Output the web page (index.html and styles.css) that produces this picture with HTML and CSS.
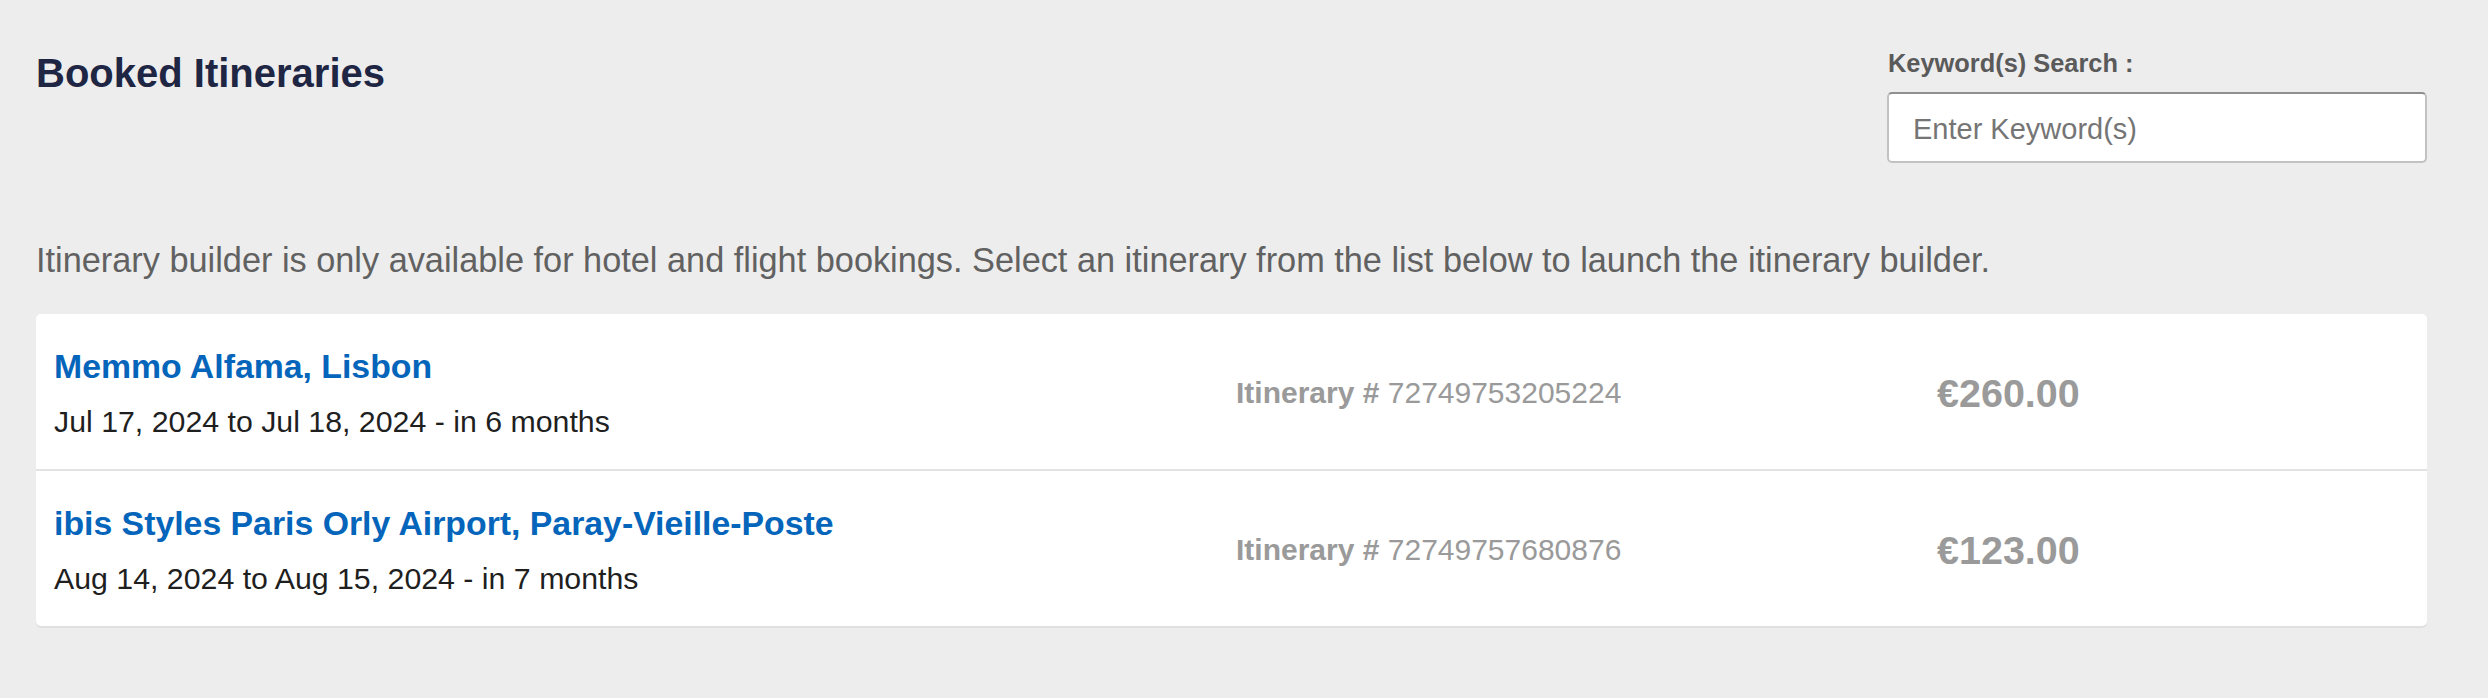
FILE: index.html
```html
<!DOCTYPE html>
<html lang="en">
<head>
<meta charset="utf-8">
<title>Booked Itineraries</title>
<link rel="stylesheet" href="styles.css">
</head>
<body>
<main class="page">
  <header class="page-header">
    <h1 class="page-title">Booked Itineraries</h1>
    <div class="search">
      <label class="search-label" for="kw">Keyword(s) Search :</label>
      <input class="search-input" id="kw" type="text" placeholder="Enter Keyword(s)">
    </div>
  </header>

  <p class="intro">Itinerary builder is only available for hotel and flight bookings. Select an itinerary from the list below to launch the itinerary builder.</p>

  <ul class="itin-list">
    <li class="itin-row">
      <div class="itin-main">
        <a class="itin-name" href="#">Memmo Alfama, Lisbon</a>
        <div class="itin-dates">Jul 17, 2024 to Jul 18, 2024 - in 6 months</div>
      </div>
      <div class="itin-number"><span class="itin-number-label">Itinerary #</span> 72749753205224</div>
      <div class="itin-price">€260.00</div>
    </li>
    <li class="itin-row">
      <div class="itin-main">
        <a class="itin-name" href="#">ibis Styles Paris Orly Airport, Paray-Vieille-Poste</a>
        <div class="itin-dates">Aug 14, 2024 to Aug 15, 2024 - in 7 months</div>
      </div>
      <div class="itin-number"><span class="itin-number-label">Itinerary #</span> 72749757680876</div>
      <div class="itin-price">€123.00</div>
    </li>
  </ul>
</main>
</body>
</html>
```

FILE: styles.css
```css
* {
  box-sizing: border-box;
}

html,
body {
  margin: 0;
  padding: 0;
  background: #ededed;
}

body {
  font-family: "Liberation Sans", Arial, Helvetica, sans-serif;
  color: #222222;
}

.page {
  padding: 48px 61px 40px 36px;
}

.page-header {
  display: flex;
  justify-content: space-between;
  align-items: flex-start;
}

.page-title {
  margin: 1px 0 0 0;
  font-size: 40px;
  line-height: 48px;
  font-weight: 700;
  color: #1e2644;
}

.search {
  width: 540px;
  display: flex;
  flex-direction: column;
}

.search-label {
  font-size: 25.4px;
  line-height: 30px;
  font-weight: 700;
  color: #5a5a5a;
  margin-left: 1px;
}

.search-input {
  margin-top: 14px;
  height: 71px;
  width: 100%;
  padding: 4px 24px 0 24px;
  font-family: "Liberation Sans", Arial, Helvetica, sans-serif;
  font-size: 29px;
  color: #333333;
  background: #ffffff;
  border: 2px solid #c2c2c2;
  border-top-color: #8f8f8f;
  border-radius: 5px;
  outline: none;
}

.search-input::placeholder {
  color: #757575;
  opacity: 1;
}

.intro {
  margin: 77px 0 34px 0;
  font-size: 34.3px;
  line-height: 40px;
  color: #616161;
}

.itin-list {
  list-style: none;
  margin: 0;
  padding: 0;
  background: #ffffff;
  border-radius: 5px;
  box-shadow: 0 2px 0 #e0e0e0;
  overflow: hidden;
}

.itin-row {
  display: grid;
  grid-template-columns: 1182px 701px 1fr;
  align-items: center;
  padding: 32px 0 29px 18px;
  border-bottom: 2px solid #e2e2e2;
}

.itin-row:last-child {
  border-bottom: none;
}

.itin-main {
  display: flex;
  flex-direction: column;
  align-items: flex-start;
}

.itin-name {
  font-size: 33.8px;
  line-height: 40px;
  font-weight: 700;
  color: #0565bb;
  text-decoration: none;
}

.itin-dates {
  margin-top: 18px;
  font-size: 30.3px;
  line-height: 36px;
  color: #1f1f1f;
}

.itin-number {
  font-size: 30px;
  line-height: 36px;
  color: #9a9a9a;
}

.itin-number-label {
  font-weight: 700;
}

.itin-price {
  font-size: 39.5px;
  line-height: 46px;
  font-weight: 700;
  color: #9a9a9a;
}
```
